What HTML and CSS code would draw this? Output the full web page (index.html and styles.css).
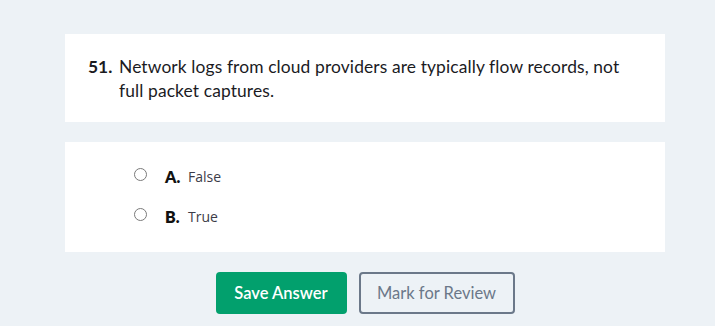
FILE: index.html
```html
<!DOCTYPE html>
<html>
<head>
<meta charset="utf-8">
<link rel="stylesheet" href="styles.css">
</head>
<body>
<main class="wrap">
  <section class="card question">
    <span class="qnum">51.</span>
    <p class="qtext">Network logs from cloud providers are typically flow records, not full packet captures.</p>
  </section>
  <section class="card options">
    <label class="opt"><span class="radio"></span><span class="letter">A.</span><span class="otext">False</span></label>
    <label class="opt"><span class="radio"></span><span class="letter">B.</span><span class="otext">True</span></label>
  </section>
  <div class="actions">
    <button class="btn save">Save Answer</button>
    <button class="btn review">Mark for Review</button>
  </div>
</main>
</body>
</html>
```
FILE: styles.css
```css
html, body {
  margin: 0;
  background: #edf2f6;
}
body {
  font-family: Lato, "Noto Sans", sans-serif;
}
.wrap {
  width: 600px;
  margin-left: 65px;
  padding-top: 34px;
}
.card {
  background: #fff;
}
.question {
  display: flex;
  height: 88px;
  box-sizing: border-box;
  padding: 21px 30px 0 23px;
  font-size: 17.4px;
  letter-spacing: 0.12px;
  line-height: 24px;
  color: #1b1b1f;
}
.qnum {
  font-weight: 700;
  width: 31px;
  flex: none;
  letter-spacing: 0;
}
.qtext {
  margin: 0;
}
.options {
  margin-top: 20px;
  height: 110px;
  box-sizing: border-box;
  padding: 22px 0 0 69px;
  display: flex;
  flex-direction: column;
  gap: 16px;
}
.opt {
  display: flex;
  align-items: center;
  height: 24px;
}
.radio {
  width: 11px;
  height: 11px;
  border: 1px solid #7a7a7a;
  border-radius: 50%;
  margin-right: 18px;
  margin-top: -3px;
}
.letter {
  font-family: Lato, sans-serif;
  font-weight: 800;
  font-size: 16px;
  color: #111;
  width: 23px;
}
.otext {
  font-family: "Open Sans", sans-serif;
  font-size: 14px;
  color: #3c3c48;
}
.actions {
  display: flex;
  justify-content: center;
  gap: 12px;
  margin-top: 20px;
}
.btn {
  height: 42px;
  border-radius: 4px;
  font-family: Lato, sans-serif;
  font-size: 16.5px;
  padding: 0;
  box-sizing: border-box;
}
.save {
  width: 131px;
  background: #02a06d;
  color: #fff;
  border: none;
  font-weight: 600;
}
.review {
  width: 156px;
  background: transparent;
  border: 2px solid #6b7889;
  color: #6b7889;
}
```
